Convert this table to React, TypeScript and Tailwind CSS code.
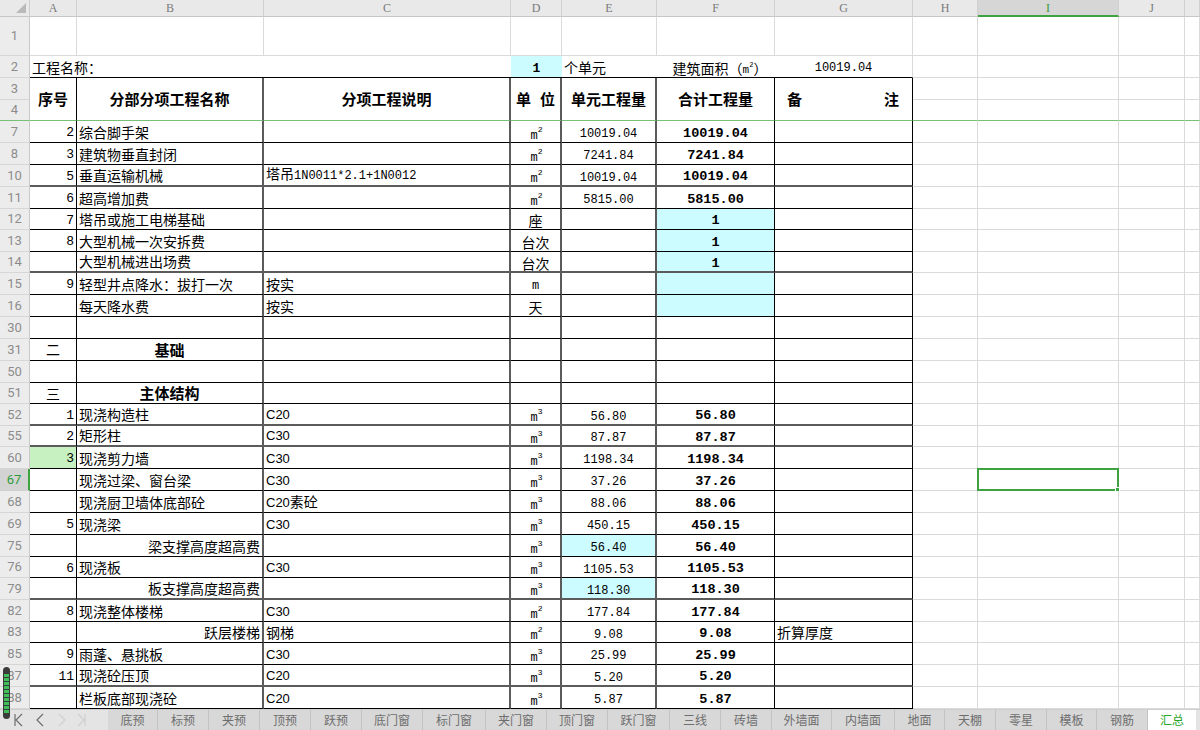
import React from "react";

type Unit = "m2" | "m3" | string;
type R = {
  n: string;
  h: 21 | 22;
  a?: string;
  aCenter?: boolean;
  aGreen?: boolean;
  b?: string;
  bAlign?: "left" | "right" | "center";
  bBold?: boolean;
  c?: string;
  d?: Unit;
  e?: string;
  f?: string;
  eCyan?: boolean;
  fCyan?: boolean;
  g?: string;
  thick?: boolean;
  sel?: boolean;
};

const rows: R[] = [
  { n: "7", h: 22, a: "2", b: "综合脚手架", d: "m2", e: "10019.04", f: "10019.04" },
  { n: "8", h: 22, a: "3", b: "建筑物垂直封闭", d: "m2", e: "7241.84", f: "7241.84" },
  { n: "10", h: 22, a: "5", b: "垂直运输机械", c: "塔吊1N0011*2.1+1N0012", d: "m2", e: "10019.04", f: "10019.04", thick: true },
  { n: "11", h: 22, a: "6", b: "超高增加费", d: "m2", e: "5815.00", f: "5815.00" },
  { n: "12", h: 21, a: "7", b: "塔吊或施工电梯基础", d: "座", f: "1", fCyan: true },
  { n: "13", h: 22, a: "8", b: "大型机械一次安拆费", d: "台次", f: "1", fCyan: true },
  { n: "14", h: 21, b: "大型机械进出场费", d: "台次", f: "1", fCyan: true, thick: true },
  { n: "15", h: 22, a: "9", b: "轻型井点降水：拔打一次", c: "按实", d: "m", fCyan: true },
  { n: "16", h: 22, b: "每天降水费", c: "按实", d: "天", fCyan: true },
  { n: "30", h: 22 },
  { n: "31", h: 22, a: "二", aCenter: true, b: "基础", bAlign: "center", bBold: true },
  { n: "50", h: 22 },
  { n: "51", h: 21, a: "三", aCenter: true, b: "主体结构", bAlign: "center", bBold: true },
  { n: "52", h: 22, a: "1", b: "现浇构造柱", c: "C20", d: "m3", e: "56.80", f: "56.80", thick: true },
  { n: "55", h: 21, a: "2", b: "矩形柱", c: "C30", d: "m3", e: "87.87", f: "87.87", thick: true },
  { n: "60", h: 22, a: "3", aGreen: true, b: "现浇剪力墙", c: "C30", d: "m3", e: "1198.34", f: "1198.34" },
  { n: "67", h: 22, b: "现浇过梁、窗台梁", c: "C30", d: "m3", e: "37.26", f: "37.26", sel: true },
  { n: "68", h: 22, b: "现浇厨卫墙体底部砼", c: "C20素砼", d: "m3", e: "88.06", f: "88.06" },
  { n: "69", h: 22, a: "5", b: "现浇梁", c: "C30", d: "m3", e: "450.15", f: "450.15" },
  { n: "75", h: 22, b: "梁支撑高度超高费", bAlign: "right", d: "m3", e: "56.40", eCyan: true, f: "56.40" },
  { n: "76", h: 21, a: "6", b: "现浇板", c: "C30", d: "m3", e: "1105.53", f: "1105.53" },
  { n: "79", h: 22, b: "板支撑高度超高费", bAlign: "right", d: "m3", e: "118.30", eCyan: true, f: "118.30", thick: true },
  { n: "82", h: 22, a: "8", b: "现浇整体楼梯", c: "C30", d: "m2", e: "177.84", f: "177.84" },
  { n: "83", h: 21, b: "跃层楼梯", bAlign: "right", c: "钢梯", d: "m2", e: "9.08", f: "9.08", g: "折算厚度" },
  { n: "85", h: 22, a: "9", b: "雨蓬、悬挑板", c: "C30", d: "m3", e: "25.99", f: "25.99" },
  { n: "87", h: 22, a: "11", b: "现浇砼压顶", c: "C20", d: "m3", e: "5.20", f: "5.20", thick: true },
  { n: "88", h: 22, b: "栏板底部现浇砼", c: "C20", d: "m3", e: "5.87", f: "5.87" },
];

const tabs: [string, number][] = [
  ["底预", 50], ["标预", 51], ["夹预", 51], ["顶预", 51], ["跃预", 51],
  ["底门窗", 61], ["标门窗", 63], ["夹门窗", 61], ["顶门窗", 61], ["跃门窗", 62],
  ["三线", 51], ["砖墙", 51], ["外墙面", 60], ["内墙面", 63], ["地面", 50],
  ["天棚", 51], ["零星", 51], ["模板", 50], ["钢筋", 51],
];

const GRID =
  "grid grid-cols-[30px_47px_187px_247px_51px_95px_118px_138px_65px_141px_66px_15px]";
const CJK = "font-['Noto_Sans_CJK_SC',sans-serif]";
const MONO = "font-['Liberation_Mono','Noto_Sans_CJK_SC',monospace]";
const LIGHT = "border-r border-b border-r-[#dadada] border-b-[#dadada]";
const THIN_R = "border-r border-r-black";
const THICK_R = "border-r-2 border-r-[#5b5b5b]";

function UnitCell({ u }: { u?: Unit }) {
  if (!u) return null;
  if (u === "m2" || u === "m3") {
    return (
      <span className={`${MONO} text-[12px] leading-none text-black relative top-[4px] left-[1px]`}>
        m<span className="text-[8px] relative -top-[7px]">{u === "m2" ? "2" : "3"}</span>
      </span>
    );
  }
  if (u === "m") {
    return <span className={`${MONO} text-[12px] leading-none relative top-[2px]`}>m</span>;
  }
  return <span className={`${CJK} text-[14px] leading-none relative top-[1px]`}>{u}</span>;
}

function RowCells({ r }: { r: R }) {
  const hh = r.h === 22 ? "h-[22px]" : "h-[21px]";
  const bb = r.thick ? "border-b-2 border-b-[#5b5b5b]" : "border-b border-b-black";
  const rowNumCls = r.sel
    ? "bg-[#d3d3d3] text-[#2f9a3a] border-r-2 border-r-[#3da23f] border-b border-b-[#cfcfcf]"
    : "bg-[#ececec] text-[#8c8c8c] border-r border-r-[#c9c9c9] border-b border-b-[#d6d6d6]";
  const bJust =
    r.bAlign === "right" ? "justify-end pr-[2px]" : r.bAlign === "center" ? "justify-center" : "justify-start pl-[2px]";
  return (
    <>
      <div className={`${hh} ${rowNumCls} flex items-center justify-center font-['Roboto',sans-serif] text-[13px]`}>
        {r.n}
      </div>
      <div
        className={`${hh} ${THIN_R} ${bb} ${r.aGreen ? "bg-[#c8f1c1]" : ""} flex items-center ${
          r.aCenter ? `justify-center ${CJK} text-[14px]` : `justify-end pr-[2px] pt-[3px] ${MONO} text-[13px]`
        }`}
      >
        {r.a}
      </div>
      <div
        className={`${hh} ${THICK_R} ${bb} flex items-end pb-[3px] ${bJust} ${CJK} text-[14px] leading-none whitespace-nowrap ${
          r.bBold ? "font-bold text-[15px]" : ""
        }`}
      >
        {r.b}
      </div>
      <div className={`${hh} ${THICK_R} ${bb} flex items-end pb-[3px] pl-[2px] leading-none whitespace-nowrap`}>
        {r.c &&
          (r.c.startsWith("C") ? (
            <span className={`${CJK} text-[13px]`}>
              <span className="font-['Liberation_Sans',sans-serif] text-[13px]">{r.c.replace("素砼", "")}</span>
              {r.c.includes("素砼") && <span className="text-[14px]">素砼</span>}
            </span>
          ) : r.c.startsWith("塔吊") ? (
            <span>
              <span className={`${CJK} text-[14px]`}>塔吊</span>
              <span className={`${MONO} text-[12px]`}>1N0011*2.1+1N0012</span>
            </span>
          ) : (
            <span className={`${CJK} text-[14px]`}>{r.c}</span>
          ))}
      </div>
      <div className={`${hh} ${THICK_R} ${bb} flex items-center justify-center`}>
        <UnitCell u={r.d} />
      </div>
      <div
        className={`${hh} ${THICK_R} ${bb} ${r.eCyan ? "bg-[#ccfcff]" : ""} flex items-center justify-center ${MONO} text-[12px] pt-[5px]`}
      >
        {r.e}
      </div>
      <div
        className={`${hh} ${THIN_R} ${bb} ${r.fCyan ? "bg-[#ccfcff]" : ""} flex items-center justify-center ${MONO} font-bold text-[13.5px] pt-[5px]`}
      >
        {r.f}
      </div>
      <div className={`${hh} ${THIN_R} ${bb} flex items-end pb-[3px] pl-[2px] ${CJK} text-[14px] leading-none`}>
        {r.g}
      </div>
      <div className={`${hh} ${LIGHT}`} />
      <div className={`${hh} ${LIGHT} relative`}>
        {r.sel && (
          <div className="absolute -left-[1px] -top-[1px] w-[142px] h-[23px] border-2 border-[#3da23f]">
            <div className="absolute -right-[3px] -bottom-[3px] w-[5px] h-[5px] bg-[#3da23f] border border-white" />
          </div>
        )}
      </div>
      <div className={`${hh} ${LIGHT}`} />
      <div className={`${hh} ${LIGHT}`} />
    </>
  );
}

const letters = ["A", "B", "C", "D", "E", "F", "G", "H", "I", "J", ""];

export default function App() {
  return (
    <div className={`w-[1200px] h-[730px] overflow-hidden bg-white relative ${CJK} text-black`}>
      <div className={GRID}>
        {/* column header */}
        <div className="h-[17px] bg-[#e9e9e9] border-r border-b border-r-[#cfcfcf] border-b-[#c6c6c6] relative">
          <div className="absolute right-[3px] bottom-[3px] w-0 h-0 border-l-[10px] border-l-transparent border-b-[10px] border-b-[#b9b9b9]" />
        </div>
        {letters.map((l, i) =>
          l === "I" ? (
            <div
              key={i}
              className="h-[17px] bg-[#d6d6d6] border-r border-r-[#cfcfcf] border-b-2 border-b-[#3da23f] flex items-center justify-center font-['Liberation_Serif',serif] text-[12px] text-[#3a9a3a]"
            >
              {l}
            </div>
          ) : (
            <div
              key={i}
              className="h-[17px] bg-[#e9e9e9] border-r border-b border-r-[#d0d0d0] border-b-[#c6c6c6] flex items-center justify-center font-['Liberation_Serif',serif] text-[12px] text-[#7a7a7a]"
            >
              {l}
            </div>
          )
        )}

        {/* row 1 */}
        <div className="h-[39px] bg-[#ececec] text-[#8c8c8c] border-r border-r-[#c9c9c9] border-b border-b-[#d6d6d6] flex items-center justify-center font-['Roboto',sans-serif] text-[13px]">
          1
        </div>
        {letters.map((_, i) => (
          <div key={i} className={`h-[39px] ${LIGHT}`} />
        ))}

        {/* row 2 */}
        <div className="h-[22px] bg-[#ececec] text-[#8c8c8c] border-r border-r-[#c9c9c9] border-b border-b-[#d6d6d6] flex items-center justify-center font-['Roboto',sans-serif] text-[13px]">
          2
        </div>
        <div className="col-span-3 h-[22px] border-b border-b-black flex items-end pb-[3px] pl-[2px] text-[14px] leading-none">
          工程名称：
        </div>
        <div className={`h-[22px] border-b border-b-black bg-[#ccfcff] flex items-center justify-center ${MONO} font-bold text-[13px] pt-[4px]`}>
          1
        </div>
        <div className="h-[22px] border-b border-b-black flex items-end pb-[3px] pl-[2px] text-[14px] leading-none">
          个单元
        </div>
        <div className="h-[22px] border-b border-b-black flex items-end justify-center pb-[2px] text-[14px] leading-none whitespace-nowrap pl-[8px]">
          建筑面积（<span className={`${MONO} text-[11px] relative top-[1px]`}>m<sup className="text-[7px] -top-[6px]">2</sup></span>）
        </div>
        <div className={`h-[22px] border-b border-b-black border-r border-r-[#dadada] flex items-center justify-center ${MONO} text-[12px] pt-[3px]`}>
          10019.04
        </div>
        <div className={`h-[22px] ${LIGHT}`} />
        <div className={`h-[22px] ${LIGHT}`} />
        <div className={`h-[22px] ${LIGHT}`} />
        <div className={`h-[22px] ${LIGHT}`} />

        {/* rows 3-4 header */}
        <div className="h-[22px] bg-[#ececec] text-[#8c8c8c] border-r border-r-[#c9c9c9] border-b border-b-[#d6d6d6] flex items-center justify-center font-['Roboto',sans-serif] text-[13px]">
          3
        </div>
        <div className={`row-span-2 h-[43px] ${THIN_R} border-b border-b-[#76c176] flex items-center justify-center font-bold text-[15px]`}>序号</div>
        <div className={`row-span-2 h-[43px] ${THICK_R} border-b border-b-[#76c176] flex items-center justify-center font-bold text-[15px]`}>分部分项工程名称</div>
        <div className={`row-span-2 h-[43px] ${THICK_R} border-b border-b-[#76c176] flex items-center justify-center font-bold text-[15px]`}>分项工程说明</div>
        <div className={`row-span-2 h-[43px] ${THICK_R} border-b border-b-[#76c176] flex items-center justify-between px-[5px] font-bold text-[15px]`}>
          <span>单</span>
          <span>位</span>
        </div>
        <div className={`row-span-2 h-[43px] ${THICK_R} border-b border-b-[#76c176] flex items-center justify-center font-bold text-[15px]`}>单元工程量</div>
        <div className={`row-span-2 h-[43px] ${THIN_R} border-b border-b-[#76c176] flex items-center justify-center font-bold text-[15px]`}>合计工程量</div>
        <div className={`row-span-2 h-[43px] ${THIN_R} border-b border-b-[#76c176] flex items-center justify-between pl-[12px] pr-[13px] font-bold text-[15px]`}>
          <span>备</span>
          <span>注</span>
        </div>
        <div className={`h-[22px] ${LIGHT}`} />
        <div className={`h-[22px] ${LIGHT}`} />
        <div className={`h-[22px] ${LIGHT}`} />
        <div className={`h-[22px] ${LIGHT}`} />
        <div className="h-[21px] bg-[#ececec] text-[#8c8c8c] border-r border-r-[#c9c9c9] border-b border-b-[#76c176] flex items-center justify-center font-['Roboto',sans-serif] text-[13px]">
          4
        </div>
        <div className="h-[21px] border-r border-r-[#dadada] border-b border-b-[#76c176]" />
        <div className="h-[21px] border-r border-r-[#dadada] border-b border-b-[#76c176]" />
        <div className="h-[21px] border-r border-r-[#dadada] border-b border-b-[#76c176]" />
        <div className="h-[21px] border-r border-r-[#dadada] border-b border-b-[#76c176]" />

        {rows.map((r) => (
          <RowCells key={r.n} r={r} />
        ))}
      </div>

      {/* sheet tabs */}
      <div className="h-[21px] flex bg-[#e4e4e4] border-t border-t-[#cfcfcf]">
        <div className="w-[108px] flex items-center text-[#6a6a6a]">
          <svg width="32" height="20" viewBox="0 0 32 20" className="shrink-0">
            <path d="M15 4 V16 M22 4 L16 10 L22 16" stroke="#6f6f6f" strokeWidth="1.2" fill="none" />
          </svg>
          <svg width="22" height="20" viewBox="0 0 22 20" className="shrink-0">
            <path d="M11 4 L5 10 L11 16" stroke="#6f6f6f" strokeWidth="1.2" fill="none" />
          </svg>
          <svg width="22" height="20" viewBox="0 0 22 20" className="shrink-0">
            <path d="M5 4 L11 10 L5 16" stroke="#d0d0d0" strokeWidth="1.2" fill="none" />
          </svg>
          <svg width="22" height="20" viewBox="0 0 22 20" className="shrink-0">
            <path d="M2 4 L8 10 L2 16 M9 4 V16" stroke="#d0d0d0" strokeWidth="1.2" fill="none" />
          </svg>
        </div>
        {tabs.map(([t, w]) => (
          <div
            key={t}
            style={{ width: w }}
            className="h-full bg-[#d8d8d8] border-r border-r-[#c2c2c2] flex items-center justify-center text-[12px] text-[#6e6e6e]"
          >
            {t}
          </div>
        ))}
        <div className="w-[48px] h-full bg-white flex items-center justify-center text-[12px] text-[#2aa52a]">汇总</div>
      </div>

      {/* floating green widget */}
      <div className="absolute left-[3px] top-[667px] w-[7px] h-[52px] rounded-[4px] bg-[#3b3b3b] flex flex-col items-center justify-center gap-[1px] py-[3px]">
        {Array.from({ length: 10 }).map((_, i) => (
          <div key={i} className="w-[5px] h-[3px] bg-[#3fbf5a]" />
        ))}
      </div>
    </div>
  );
}
